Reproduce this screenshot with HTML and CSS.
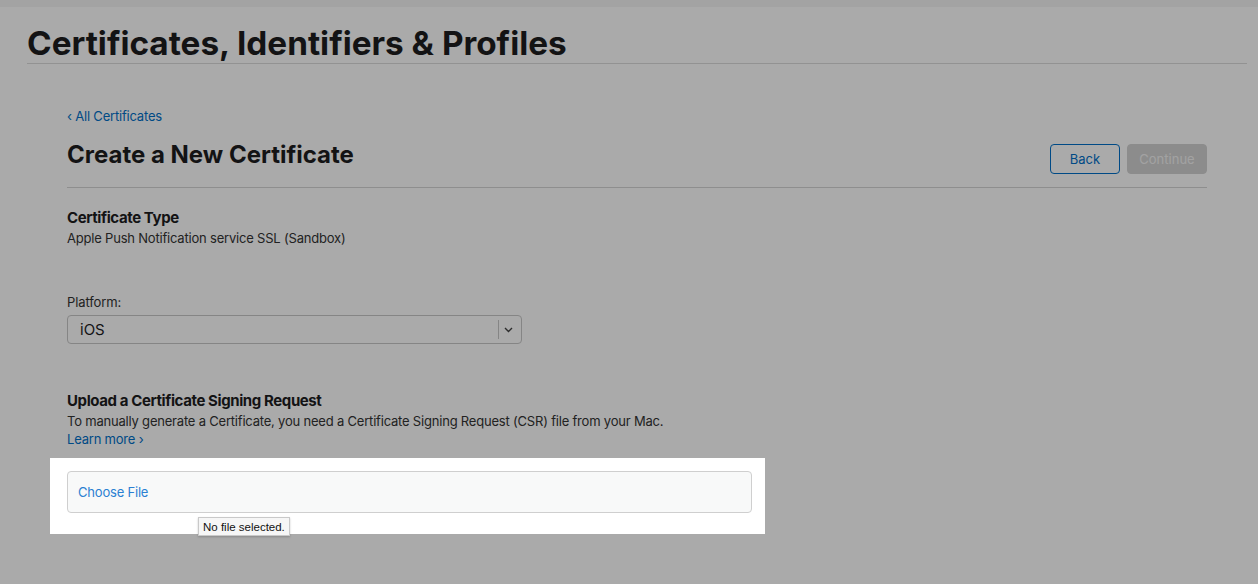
FILE: index.html
```html
<!DOCTYPE html>
<html lang="en">
<head>
<meta charset="utf-8">
<title>Certificates, Identifiers &amp; Profiles</title>
<link rel="stylesheet" href="styles.css">
</head>
<body>
<div class="topbar"></div>
<header class="header">
  <h1 class="header-title">Certificates, Identifiers &amp; Profiles</h1>
</header>
<main class="content">
  <a class="back-link" href="#">&lsaquo; All Certificates</a>
  <div class="title-row">
    <h2 class="page-title">Create a New Certificate</h2>
    <div class="actions">
      <button class="btn btn-outline" type="button">Back</button>
      <button class="btn btn-disabled" type="button" disabled>Continue</button>
    </div>
  </div>

  <section class="section section-type">
    <h3 class="section-title">Certificate Type</h3>
    <p class="section-text">Apple Push Notification service SSL (Sandbox)</p>
  </section>

  <section class="section section-platform">
    <label class="field-label">Platform:</label>
    <div class="select">
      <span class="select-value">iOS</span>
      <span class="select-divider"></span>
      <svg class="select-chevron" width="9" height="6" viewBox="0 0 9 6"><path d="M1 1l3.5 3.5L8 1" fill="none" stroke="#444" stroke-width="1.4"/></svg>
    </div>
  </section>

  <section class="section section-upload">
    <h3 class="section-title">Upload a Certificate Signing Request</h3>
    <p class="section-text">To manually generate a Certificate, you need a Certificate Signing Request (CSR) file from your Mac.</p>
    <a class="learn-link" href="#">Learn more &rsaquo;</a>
  </section>

  <div class="overlay"></div>
  <div class="highlight">
    <div class="file-input">
      <span class="file-choose">Choose File</span>
    </div>
    <div class="tooltip">No file selected.</div>
  </div>
</main>
</body>
</html>
```
FILE: styles.css
```css
* { box-sizing: border-box; }
html, body { margin: 0; padding: 0; }
body {
  background: #ffffff;
  font-family: "Inter", "Roboto", "Liberation Sans", sans-serif;
  color: #1d1d1f;
  width: 1258px;
  height: 584px;
  overflow: hidden;
}
.topbar { height: 7px; background: #f5f5f5; }
.header {
  margin: 0 11px 0 27px;
  padding-top: 17px;
  border-bottom: 1px solid #dcdcdc;
}
.header-title {
  margin: 0;
  font-family: "Inter", "Roboto", sans-serif;
  font-size: 33.3px;
  line-height: 39px;
  font-weight: 700;
  letter-spacing: 0;
  color: #1d1d1f;
}
.content {
  margin: 0 51px 0 67px;
  padding-top: 43px;
}
.back-link {
  display: block;
  font-size: 13px;
  line-height: 18px;
  letter-spacing: -0.2px;
  color: #0070c9;
  text-decoration: none;
}
.title-row {
  display: flex;
  justify-content: space-between;
  align-items: flex-start;
  margin-top: 14px;
  padding-bottom: 13px;
  border-bottom: 1px solid #d6d6d6;
}
.page-title {
  margin: 0;
  font-size: 24px;
  line-height: 32px;
  font-weight: 700;
}
.actions { display: flex; gap: 7px; margin-top: 5px; }
.btn {
  height: 30px;
  border-radius: 4px;
  font-family: inherit;
  font-size: 13px;
  padding: 0;
}
.btn-outline {
  width: 70px;
  background: transparent;
  border: 1px solid #0070c9;
  color: #0070c9;
}
.btn-disabled {
  width: 80px;
  background: #d2d2d2;
  border: 1px solid #d2d2d2;
  color: #f4f4f4;
}
.section { margin: 0; }
.section-type { padding-top: 20px; }
.section-title {
  margin: 0;
  font-size: 15px;
  line-height: 20px;
  font-weight: 700;
  letter-spacing: -0.4px;
}
.section-text {
  margin: 1px 0 0;
  font-size: 13px;
  line-height: 18px;
  letter-spacing: -0.2px;
  color: #333333;
}
.section-platform { padding-top: 46px; }
.field-label {
  display: block;
  font-size: 13px;
  line-height: 18px;
  letter-spacing: -0.1px;
  color: #333333;
}
.select {
  margin-top: 4px;
  width: 455px;
  height: 29px;
  border: 1px solid #c8c8c8;
  border-radius: 4px;
  display: flex;
  align-items: center;
  padding-left: 12px;
}
.select-value { flex: 1; font-size: 15px; color: #1d1d1f; }
.select-divider { width: 1px; height: 19px; background: #c8c8c8; }
.select-chevron { margin: 1px 8px 0 5px; }
.section-upload { padding-top: 47px; }
.learn-link {
  display: block;
  font-size: 13px;
  line-height: 18px;
  letter-spacing: -0.2px;
  color: #0070c9;
  text-decoration: none;
}
.overlay {
  position: fixed;
  inset: 0;
  background: rgba(0, 0, 0, 0.333);
  z-index: 10;
}
.highlight {
  position: relative;
  z-index: 11;
  background: #ffffff;
  margin: 10px 0 0 -17px;
  width: 715px;
  padding: 13px 13px 21px 17px;
}
.file-input {
  height: 42px;
  border: 1px solid #cfcfcf;
  border-radius: 4px;
  background: #f8f9f9;
  display: flex;
  align-items: center;
  padding-left: 10px;
}
.file-choose { font-size: 13px; letter-spacing: -0.2px; color: #2b80d2; }
.tooltip {
  position: absolute;
  left: 148px;
  top: 59px;
  height: 19px;
  padding: 2px 4px 0 4px;
  font-family: "Liberation Sans", sans-serif;
  font-size: 11.5px;
  line-height: 15px;
  color: #111;
  background: #f6f6f6;
  border: 1px solid #c9c9c9;
  box-shadow: 0 1px 2px rgba(0,0,0,0.2);
}
```
